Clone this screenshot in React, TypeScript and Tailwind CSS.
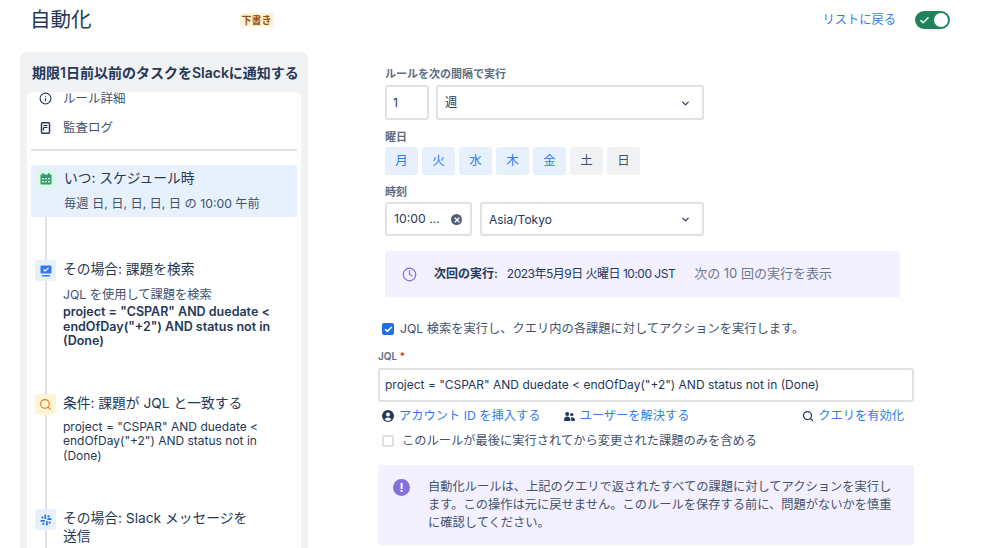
import { Check, ChevronDown, Clock, Info, Search, X } from "lucide-react";
import type { ReactNode } from "react";

const FONT = "font-['Inter','Noto_Sans_CJK_JP',sans-serif]";

const days = [
  { label: "月", on: true },
  { label: "火", on: true },
  { label: "水", on: true },
  { label: "木", on: true },
  { label: "金", on: true },
  { label: "土", on: false },
  { label: "日", on: false },
];

function Label({ children }: { children: ReactNode }) {
  return <div className="h-[14px] text-[11px] leading-[14px] font-semibold text-[#5e6c84]">{children}</div>;
}

function Field({ className, children }: { className: string; children: ReactNode }) {
  return (
    <div className={`flex items-center rounded-[3px] border-2 border-[#dfe1e6] bg-white text-[#253858] ${className}`}>
      {children}
    </div>
  );
}

function CalendarIcon() {
  return (
    <svg width="12" height="12" viewBox="0 0 12 12">
      <rect x="0.5" y="1.5" width="11" height="10" rx="1" fill="#2e9e6b" />
      <rect x="2.5" y="0" width="1.4" height="2.5" fill="#2e9e6b" />
      <rect x="8.1" y="0" width="1.4" height="2.5" fill="#2e9e6b" />
      <g fill="#e3fcef">
        <rect x="2" y="5" width="2" height="1.4" />
        <rect x="5" y="5" width="2" height="1.4" />
        <rect x="8" y="5" width="2" height="1.4" />
        <rect x="2" y="8" width="2" height="1.4" />
        <rect x="5" y="8" width="2" height="1.4" />
        <rect x="8" y="8" width="2" height="1.4" />
      </g>
    </svg>
  );
}

function SearchIssueIcon() {
  return (
    <svg width="12" height="12" viewBox="0 0 12 12">
      <rect x="0.5" y="0.5" width="11" height="8" rx="1" fill="#2f7cf0" />
      <path d="M3.5 4.5l1.6 1.5 3.4-3.2" fill="none" stroke="#fff" strokeWidth="1.1" />
      <rect x="2" y="10" width="8" height="1.6" rx="0.5" fill="#2f7cf0" />
    </svg>
  );
}

function SlackIcon() {
  return (
    <svg width="12" height="12" viewBox="0 0 12 12" fill="#1f6fe5">
      <rect x="4.4" y="0.4" width="1.7" height="4.6" rx="0.85" />
      <rect x="7.1" y="4.2" width="4.6" height="1.7" rx="0.85" />
      <rect x="6" y="7" width="1.7" height="4.6" rx="0.85" />
      <rect x="0.4" y="6.1" width="4.6" height="1.7" rx="0.85" />
      <circle cx="8.6" cy="2.4" r="1.1" />
      <circle cx="2.4" cy="3.6" r="1.1" />
      <circle cx="9.6" cy="8.6" r="1.1" />
      <circle cx="3.4" cy="9.8" r="1.1" />
    </svg>
  );
}

function AuditIcon() {
  return (
    <svg width="11" height="12" viewBox="0 0 11 12" className="shrink-0" fill="none" stroke="#253858">
      <rect x="1.5" y="0.75" width="8" height="10.5" rx="1" strokeWidth="1.5" />
      <path d="M3.5 3.5h4M3.5 5.5h4M3.5 5.5v3" strokeWidth="1.2" />
    </svg>
  );
}

function AccountIcon() {
  return (
    <svg width="12" height="12" viewBox="0 0 12 12" className="shrink-0">
      <circle cx="6" cy="6" r="6" fill="#253858" />
      <circle cx="6" cy="4.6" r="2" fill="#fff" />
      <path d="M2.6 9.6c.6-1.5 1.9-2.2 3.4-2.2s2.8.7 3.4 2.2A4.6 4.6 0 0 1 6 10.9a4.6 4.6 0 0 1-3.4-1.3z" fill="#fff" />
    </svg>
  );
}

function PeopleIcon() {
  return (
    <svg width="11" height="11" viewBox="0 0 11 11" className="shrink-0" fill="#253858">
      <circle cx="3.2" cy="3" r="2" />
      <circle cx="7.8" cy="3.6" r="1.7" />
      <path d="M0 9.2C0 7 1.4 5.6 3.2 5.6S6.4 7 6.4 9.2c0 .6-.3.8-.8.8H.8c-.5 0-.8-.2-.8-.8z" />
      <path d="M7.3 10h2.9c.5 0 .8-.2.8-.8 0-1.9-1.2-3-2.9-3-.6 0-1.2.2-1.6.5.5.7.8 1.5.8 2.5z" />
    </svg>
  );
}

function Step({
  icon,
  iconBg,
  title,
  height,
  children,
}: {
  icon: ReactNode;
  iconBg: string;
  title: ReactNode;
  height: string;
  children?: ReactNode;
}) {
  return (
    <div className={`flex ${height}`}>
      <div className="flex w-[21px] shrink-0 flex-col items-center">
        <div className={`flex h-[21px] w-[21px] shrink-0 items-center justify-center rounded-[3px] ${iconBg}`}>{icon}</div>
        <div className="w-[2px] flex-1 bg-[#dfe1e6]" />
      </div>
      <div className="ml-[7px] w-[212px]">
        <div className="max-w-[195px] text-[13.75px] leading-[18px] text-[#253858]">{title}</div>
        {children}
      </div>
    </div>
  );
}

export default function App() {
  return (
    <div className={`h-[548px] w-[999px] overflow-hidden bg-white ${FONT}`}>
      <header className="flex h-[52px] items-start">
        <h1 className="mt-[6px] ml-[30px] text-[20.5px] leading-[28px] font-normal text-[#253858]">自動化</h1>
        <span className="mt-[13px] ml-[148px] flex h-[14px] w-[34px] items-center justify-center rounded-[3px] bg-[#fff4d6] text-[10px] font-semibold text-[#974f0c]">
          下書き
        </span>
        <a className="mt-[12px] ml-[549px] text-[12.25px] leading-[16px] text-[#2f7cf0]">リストに戻る</a>
        <div className="mt-[11px] ml-[19px] flex h-[18px] w-[35px] items-center justify-between rounded-full bg-[#1f845a] px-[2px]">
          <Check size={11} strokeWidth={3} className="ml-[2px] text-white" />
          <span className="h-[14px] w-[14px] rounded-full bg-white" />
        </div>
      </header>

      <div className="flex">
        <aside className="ml-[20px] h-[520px] w-[288px] rounded-t-[6px] bg-[#f1f2f4] px-[7px]">
          <div className="flex h-[40px] items-center pl-[5px] text-[14px] font-semibold whitespace-nowrap text-[#253858]">
            期限1日前以前のタスクをSlackに通知する
          </div>
          <div className="h-[480px] overflow-hidden rounded-t-[6px] bg-white px-[4px]">
            <div className="flex h-[12px] items-end text-[12.5px] text-[#42526e]">
              <Info size={13} className="mb-[-1px] ml-[8px] shrink-0 text-[#253858]" />
              <span className="mb-[-5px] ml-[11px]">ルール詳細</span>
            </div>
            <div className="mt-[14px] flex h-[20px] items-center text-[12.5px] text-[#42526e]">
              <span className="ml-[9px] flex">
                <AuditIcon />
              </span>
              <span className="ml-[12px]">監査ログ</span>
            </div>
            <div className="mt-[11px] h-[2px] bg-[#dfe1e6]" />
            <div className="mt-[14px] h-[52px] rounded-[3px] bg-[#e7f1fd] pt-[4px] pl-[5px]">
              <div className="flex">
                <div className="flex h-[20px] w-[20px] shrink-0 items-center justify-center rounded-[3px] bg-[#dcf6e9]">
                  <CalendarIcon />
                </div>
                <div className="ml-[8px]">
                  <div className="text-[13.75px] leading-[18px] text-[#253858]">いつ: スケジュール時</div>
                  <div className="mt-[9px] text-[12.25px] leading-[16px] text-[#42526e]">毎週 日, 日, 日, 日, 日 の 10:00 午前</div>
                </div>
              </div>
            </div>
            <div className="ml-[4px]">
              <div className="ml-[10px] h-[43px] w-[2px] bg-[#dfe1e6]" />
              <Step height="h-[134px]" iconBg="bg-[#e7f1fd]" icon={<SearchIssueIcon />} title="その場合: 課題を検索">
                <div className="mt-[10px] text-[12.25px] leading-[14.4px] text-[#42526e]">JQL を使用して課題を検索</div>
                <div className="mt-[3px] text-[12.5px] leading-[14.4px] font-semibold text-[#253858]">
                  project = "CSPAR" AND duedate &lt; endOfDay("+2") AND status not in (Done)
                </div>
              </Step>
              <Step height="h-[115px]" iconBg="bg-[#fff4d6]" icon={<Search size={13} strokeWidth={2} className="text-[#e07b16]" />} title="条件: 課題が JQL と一致する">
                <div className="mt-[8px] text-[12px] leading-[14.4px] text-[#253858]">
                  project = "CSPAR" AND duedate &lt; endOfDay("+2") AND status not in (Done)
                </div>
              </Step>
              <Step height="h-[60px]" iconBg="bg-[#e7f1fd]" icon={<SlackIcon />} title="その場合: Slack メッセージを送信" />
            </div>
          </div>
        </aside>

        <main className="ml-[70px] w-[536px] text-[#253858]">
          <div className="ml-[7px] w-[515px] pt-[15px]">
            <Label>ルールを次の間隔で実行</Label>
            <div className="mt-[4px] flex gap-[7px]">
              <Field className="h-[35px] w-[44px] pt-[1px] pl-[6px] text-[12.25px]">1</Field>
              <Field className="h-[35px] w-[268px] justify-between pt-[1px] pr-[11px] pl-[7px] text-[12.25px]">
                週
                <ChevronDown size={11} strokeWidth={3} className="text-[#344563]" />
              </Field>
            </div>
            <div className="mt-[10px]">
              <Label>曜日</Label>
            </div>
            <div className="mt-[3px] flex gap-[4px]">
              {days.map((d) => (
                <div
                  key={d.label}
                  className={`flex h-[28px] w-[33px] items-center justify-center rounded-[3px] text-[12.5px] ${
                    d.on ? "bg-[#e7f1fd] text-[#2f7cf0]" : "bg-[#f1f2f4] text-[#42526e]"
                  }`}
                >
                  {d.label}
                </div>
              ))}
            </div>
            <div className="mt-[10px]">
              <Label>時刻</Label>
            </div>
            <div className="mt-[3px] flex gap-[8px]">
              <Field className="h-[34px] w-[87px] justify-between pt-[1px] pr-[8px] pl-[7px] text-[12.25px]">
                10:00 ...
                <span className="flex h-[11px] w-[11px] items-center justify-center rounded-full bg-[#505f79]">
                  <X size={8} strokeWidth={3.5} className="text-white" />
                </span>
              </Field>
              <Field className="h-[34px] w-[224px] justify-between pt-[1px] pr-[11px] pl-[7px] text-[12px]">
                Asia/Tokyo
                <ChevronDown size={11} strokeWidth={3} className="text-[#344563]" />
              </Field>
            </div>
            <div className="mt-[15px] flex h-[46px] items-center rounded-[3px] bg-[#f3f0ff] pl-[17px] text-[12px]">
              <Clock size={15} strokeWidth={2} className="shrink-0 text-[#8270db]" />
              <span className="ml-[17px] font-semibold">次回の実行:</span>
              <span className="ml-[9px] tracking-[-0.5px]">2023年5月9日 火曜日 10:00 JST</span>
              <span className="ml-[19px] text-[13px] text-[#6b778c]">次の 10 回の実行を表示</span>
            </div>
          </div>

          <div className="mt-[26px] ml-[4px] flex h-[12px] items-center text-[12.25px]">
            <span className="flex h-[12px] w-[12px] items-center justify-center rounded-[2px] bg-[#1f6fe5]">
              <Check size={9} strokeWidth={4} className="text-white" />
            </span>
            <span className="ml-[6px] text-[#42526e]">JQL 検索を実行し、クエリ内の各課題に対してアクションを実行します。</span>
          </div>

          <div className="mt-[15px] h-[13px] text-[10px] leading-[13px] font-semibold text-[#5e6c84]">
            JQL <span className="text-[#de350b]">*</span>
          </div>
          <Field className="mt-[5px] h-[34px] w-[536px] pl-[5px] text-[12px]">
            project = "CSPAR" AND duedate &lt; endOfDay("+2") AND status not in (Done)
          </Field>

          <div className="mt-[6px] flex h-[16px] items-center text-[12.25px] text-[#2f7cf0]">
            <span className="ml-[4px] flex">
              <AccountIcon />
            </span>
            <span className="ml-[5px]">アカウント ID を挿入する</span>
            <span className="ml-[23px] flex">
              <PeopleIcon />
            </span>
            <span className="ml-[5px]">ユーザーを解決する</span>
            <Search size={12} strokeWidth={2.5} className="ml-auto shrink-0 text-[#253858]" />
            <span className="mr-[10px] ml-[4px]">クエリを有効化</span>
          </div>

          <div className="mt-[11px] ml-[4px] flex h-[12px] items-center text-[12.25px] text-[#42526e]">
            <span className="h-[12px] w-[12px] rounded-[2px] border-2 border-[#dfe1e6]" />
            <span className="ml-[8px]">このルールが最後に実行されてから変更された課題のみを含める</span>
          </div>

          <div className="mt-[18px] flex h-[80px] rounded-[3px] bg-[#f3f0ff] pt-[13px] pl-[15px]">
            <span className="mt-[1px] flex h-[17px] w-[17px] shrink-0 items-center justify-center rounded-full bg-[#8270db] text-[12px] leading-none font-bold text-white">
              !
            </span>
            <p className="ml-[18px] w-[470px] text-[12.25px] leading-[18px] text-[#42526e]">
              自動化ルールは、上記のクエリで返されたすべての課題に対してアクションを実行します。この操作は元に戻せません。このルールを保存する前に、問題がないかを慎重に確認してください。
            </p>
          </div>
        </main>
      </div>
    </div>
  );
}
